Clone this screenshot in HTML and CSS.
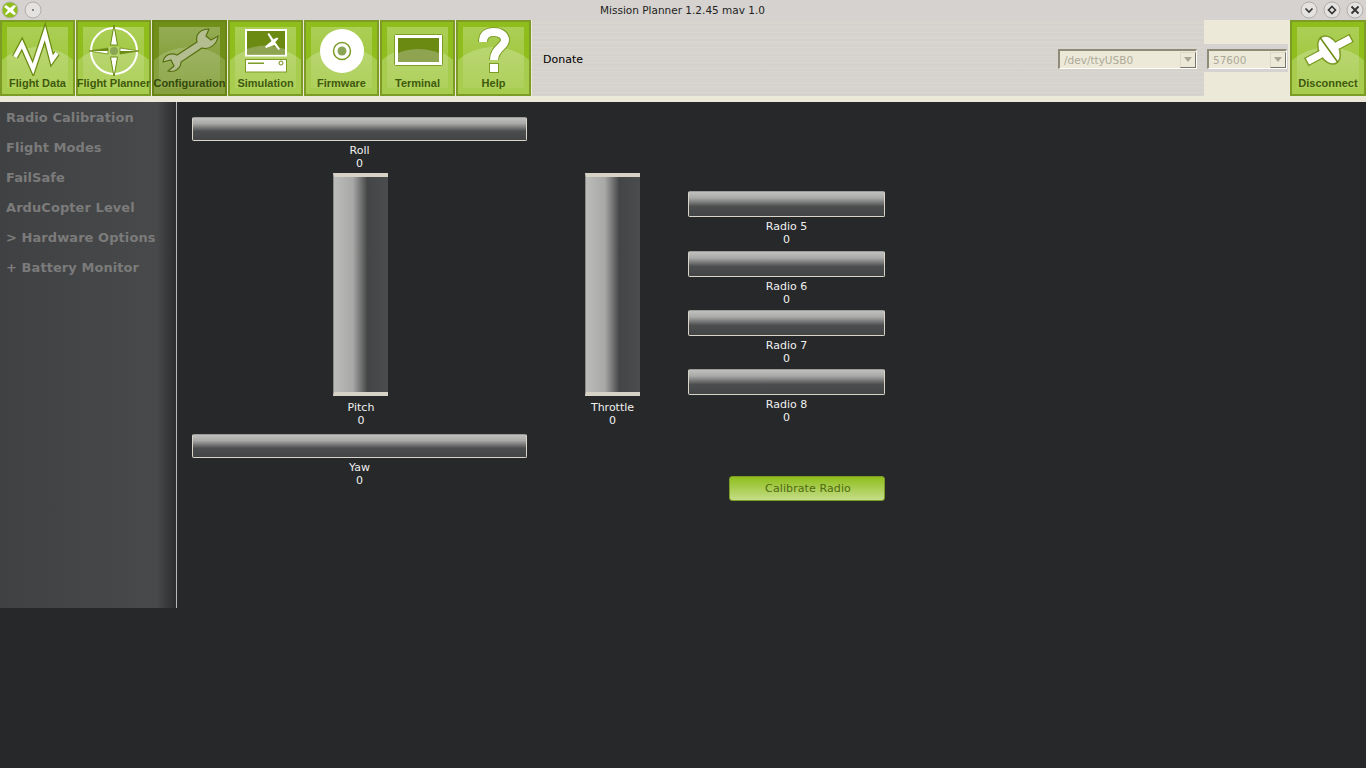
FILE: index.html
```html
<!DOCTYPE html>
<html lang="en">
<head>
    <meta charset="UTF-8">
    <title>Mission Planner 1.2.45 mav 1.0</title>
    <link rel="stylesheet" href="styles.css">
</head>
<body>
    <div class="titlebar">
        <div class="win-group">
            <svg class="win-btn" viewBox="0 0 18 18">
                <circle cx="9" cy="9" r="8" fill="#8fbe1c" stroke="#b5b5a8"/>
                <path d="M3 6 L5 4 L9 7 L13 4 L15 5 L12 9 L15 13 L13 14 L9 11 L5 14 L4 13 L7 9 Z" fill="#fff"/>
            </svg>
            <svg class="win-btn" viewBox="0 0 18 18">
                <circle cx="9" cy="9" r="8" fill="#e4e2e0" stroke="#b0adaa"/>
                <circle cx="9" cy="9" r="1" fill="#666"/>
            </svg>
        </div>
        <div class="win-title">Mission Planner 1.2.45 mav 1.0</div>
        <div class="win-group win-group-right">
            <svg class="win-btn" viewBox="0 0 18 18">
                <circle cx="9" cy="9" r="8" fill="#e4e2e0" stroke="#b0adaa"/>
                <path d="M5.5 7.5 L9 11 L12.5 7.5" fill="none" stroke="#333" stroke-width="1.6"/>
            </svg>
            <svg class="win-btn" viewBox="0 0 18 18">
                <circle cx="9" cy="9" r="8" fill="#e4e2e0" stroke="#b0adaa"/>
                <path d="M9 5.5 L12.5 9 L9 12.5 L5.5 9 Z" fill="none" stroke="#333" stroke-width="1.6"/>
            </svg>
            <svg class="win-btn" viewBox="0 0 18 18">
                <circle cx="9" cy="9" r="8" fill="#e4e2e0" stroke="#b0adaa"/>
                <path d="M5.5 5.5 L12.5 12.5 M12.5 5.5 L5.5 12.5" fill="none" stroke="#333" stroke-width="1.8"/>
            </svg>
        </div>
    </div>

    <div class="toolbar">
        <div class="tool-btns">
            <div class="tool-btn">
                <svg class="tool-icon" viewBox="2 22 71 54">
                    <path class="zig-out" d="M15 57 L22 44 L33 69 L45 33 L52 60 L57 53"/>
                    <path class="zig-in" d="M15 57 L22 44 L33 69 L45 33 L52 60 L57 53"/>
                </svg>
                <span>Flight Data</span>
            </div>
            <div class="tool-btn">
                <svg class="tool-icon" viewBox="2 22 71 54">
                    <circle cx="38" cy="51" r="23" fill="none" stroke="#fff" stroke-width="2"/>
                    <path d="M38 25 L41.500 45 L34.500 45 Z M38 77 L41.500 57 L34.500 57 Z" fill="#fff" stroke="#6b8a12"/>
                    <path d="M13 51 L32 48 L32 54 Z M63 51 L44 48 L44 54 Z" fill="#fff" stroke="#6b8a12" stroke-width="0.8"/>
                    <path d="M13 51 L32 48 L32 51 Z M63 51 L44 54 L44 51 Z" fill="#6b8a12"/>
                    <circle cx="38" cy="51" r="4" fill="#8aa654"/>
                </svg>
                <span>Flight Planner</span>
            </div>
            <div class="tool-btn tool-btn-active">
                <svg class="tool-icon" viewBox="2 22 71 54">
                    <path d="M57 29 C48 29 43 35 45 42 L25 55 C19 52 12 55 11 62 L19 60 L22 66 L16 71 C23 73 29 68 29 62 L50 48 C57 50 65 45 66 36 L59 40 L54 36 Z" fill="#b3bd90" stroke="#56700f" stroke-width="1.2"/>
                </svg>
                <span>Configuration</span>
            </div>
            <div class="tool-btn">
                <svg class="tool-icon" viewBox="2 22 71 54">
                    <rect x="18" y="30" width="40" height="25.500" fill="#6b8a12" stroke="#fff" stroke-width="2"/>
                    <path d="M19 49 Q38 42 57 49 L57 54.500 L19 54.500 Z" fill="#8ea450"/>
                    <path d="M39.500 34 L41 33 L52 49 L50.500 50 L46.500 45 L38 48 L37 46.500 L43.500 41 Z M44 40 L49 37.500 L50.500 38.500 L46.500 43 Z" fill="#fff"/>
                    <rect x="17.500" y="59.500" width="41" height="12.500" fill="#fff" stroke="#7d9c25"/>
                    <rect x="20" y="62.500" width="16" height="1.500" fill="#7d9c25"/>
                    <circle cx="53" cy="63" r="2" fill="#fff" stroke="#6b8a12"/>
                </svg>
                <span>Simulation</span>
            </div>
            <div class="tool-btn">
                <svg class="tool-icon" viewBox="2 22 71 54">
                    <circle cx="38" cy="51" r="22" fill="#fff"/>
                    <circle cx="38" cy="51" r="8.500" fill="none" stroke="#7d9c25" stroke-width="1.500"/>
                    <circle cx="38" cy="51" r="4.500" fill="#8aa654"/>
                </svg>
                <span>Firmware</span>
            </div>
            <div class="tool-btn">
                <svg class="tool-icon" viewBox="2 22 71 54">
                    <rect x="14.500" y="34.500" width="48" height="31" rx="1" fill="#fff" stroke="#7d9c25"/>
                    <rect x="18" y="38" width="41" height="24" fill="#6b8a12"/>
                    <path d="M18 53 Q38 45 59 53 L59 62 L18 62 Z" fill="#8ea450"/>
                </svg>
                <span>Terminal</span>
            </div>
            <div class="tool-btn">
                <svg class="tool-icon" viewBox="2 22 71 54">
                    <path class="hook-out" d="M27 42 C27 35 31 32 38 32 C45 32 49 36 49 40 C49 47 38 48 38 60"/>
                    <path class="hook-in" d="M27 42 C27 35 31 32 38 32 C45 32 49 36 49 40 C49 47 38 48 38 60"/>
                    <rect x="33.500" y="63.500" width="9" height="9" fill="#fff" stroke="#7d9c25"/>
                </svg>
                <span>Help</span>
            </div>
        </div>
        <div class="toolbar-wood">
            <a class="donate">Donate</a>
            <div class="combo combo-port">
                <span>/dev/ttyUSB0</span>
                <i class="combo-arrow"></i>
            </div>
        </div>
        <div class="toolbar-conn">
            <div class="baud-strip">
                <div class="combo combo-baud">
                    <span>57600</span>
                    <i class="combo-arrow"></i>
                </div>
            </div>
        </div>
        <div class="tool-btn tool-btn-conn">
            <svg class="tool-icon" viewBox="2 22 72 54">
                <g transform="rotate(-28 39 50)">
                    <g fill="#fff" stroke="#7d9c25" stroke-width="1.500">
                        <rect x="14" y="46" width="50" height="8"/>
                        <ellipse cx="39" cy="50" rx="10" ry="15"/>
                    </g>
                    <rect x="15" y="46.500" width="48" height="7" fill="#fff"/>
                    <path d="M37 35 L41 65" stroke="#6b8a12" stroke-width="1.500"/>
                </g>
            </svg>
            <span>Disconnect</span>
        </div>
    </div>
    <div class="strip"></div>

    <div class="main">
        <div class="sidebar">
            <div class="side-item">Radio Calibration</div>
            <div class="side-item">Flight Modes</div>
            <div class="side-item">FailSafe</div>
            <div class="side-item">ArduCopter Level</div>
            <div class="side-item">&gt; Hardware Options</div>
            <div class="side-item">+ Battery Monitor</div>
        </div>
        <div class="content">
            <div class="col-sticks">
                <div class="hbar"></div>
                <div class="bar-label">Roll<br>0</div>
                <div class="vbar vbar-pitch"></div>
                <div class="bar-label label-pitch label-shift">Pitch<br>0</div>
                <div class="hbar"></div>
                <div class="bar-label">Yaw<br>0</div>
            </div>
            <div class="col-throttle">
                <div class="vbar"></div>
                <div class="bar-label label-pitch">Throttle<br>0</div>
            </div>
            <div class="col-radios">
                <div class="radio-row">
                    <div class="hbar hbar-radio"></div>
                    <div class="bar-label">Radio 5<br>0</div>
                </div>
                <div class="radio-row">
                    <div class="hbar hbar-radio"></div>
                    <div class="bar-label">Radio 6<br>0</div>
                </div>
                <div class="radio-row">
                    <div class="hbar hbar-radio"></div>
                    <div class="bar-label">Radio 7<br>0</div>
                </div>
                <div class="radio-row">
                    <div class="hbar hbar-radio"></div>
                    <div class="bar-label">Radio 8<br>0</div>
                </div>
                <button class="calibrate">Calibrate Radio</button>
            </div>
        </div>
    </div>
</body>
</html>
```

FILE: styles.css
```css
* {
    box-sizing: border-box;
}

html, body {
    height: 100%;
}

body {
    margin: 0;
    background: #26282a;
    font-family: "DejaVu Sans", sans-serif;
    font-size: 11px;
    overflow: hidden;
}

/* window title bar */
.titlebar {
    height: 20px;
    background: #d6d2cf;
    display: flex;
    align-items: center;
    justify-content: space-between;
    padding: 0 2px 0 1px;
}

.win-title {
    color: #222;
    font-size: 10.5px;
}

.win-group {
    display: flex;
    gap: 5px;
    width: 110px;
}

.win-group-right {
    justify-content: flex-end;
}

.win-btn {
    width: 18px;
    height: 18px;
}

/* toolbar */
.toolbar {
    height: 76px;
    display: flex;
    background: #ece9d8;
}

.tool-btns {
    display: flex;
    gap: 1px;
}

.tool-btn {
    width: 75px;
    height: 76px;
    border: 2px solid #7d9c25;
    position: relative;
    display: flex;
    flex-direction: column;
    align-items: center;
    background:
        radial-gradient(ellipse 52px 47px at 50% 100%, rgba(255,255,255,0.22) 99%, transparent 100%),
        linear-gradient(#8fbe1c, #8fbe1c);
    color: #3f5a0c;
    font-family: "Liberation Sans", sans-serif;
    font-weight: bold;
    font-size: 11px;
    white-space: nowrap;
}

.tool-btn::before {
    content: "";
    position: absolute;
    left: 5px;
    right: 5px;
    top: 5px;
    bottom: 6px;
    background: linear-gradient(rgba(255,255,255,0.26), rgba(255,255,255,0.08));
}

.tool-btn-active {
    border-color: #688516;
    background:
        radial-gradient(ellipse 52px 47px at 50% 100%, rgba(255,255,255,0.16) 99%, transparent 100%),
        linear-gradient(#6f8f18, #6f8f18);
    color: #33480a;
}

.tool-btn-conn {
    width: 76px;
}

.tool-icon {
    width: 71px;
    height: 54px;
    position: relative;
    flex: none;
}

.tool-btn-conn .tool-icon {
    width: 72px;
}

.tool-btn span {
    position: relative;
    line-height: 14px;
}

.zig-out, .zig-in, .hook-out, .hook-in {
    fill: none;
    stroke-linejoin: miter;
    stroke-miterlimit: 10;
}

.zig-out {
    stroke: #6b8a12;
    stroke-width: 6.5;
}

.zig-in {
    stroke: #fff;
    stroke-width: 4;
}

.hook-out {
    stroke: #7d9c25;
    stroke-width: 10;
}

.hook-in {
    stroke: #fff;
    stroke-width: 8;
}

.toolbar-wood {
    flex: 1;
    display: flex;
    align-items: center;
    margin-left: 1px;
    padding: 0 7px 0 11px;
    background:
        repeating-linear-gradient(0deg, rgba(255,255,255,0.05) 0 1px, transparent 1px 3px),
        repeating-linear-gradient(0deg, rgba(0,0,0,0.012) 0 2px, transparent 2px 5px),
        #d7d3cd;
}

.donate {
    color: #000;
    font-size: 11px;
    margin-top: 3px;
}

.combo {
    height: 20px;
    background: #ece9d8;
    border-style: solid;
    border-width: 2px 1px 1px 2px;
    border-color: #8e8c78 #fff #fff #8e8c78;
    display: flex;
    align-items: center;
    justify-content: space-between;
    color: #aca998;
    font-size: 10.5px;
    padding-left: 4px;
}

.combo-port {
    width: 139px;
    margin-left: auto;
    margin-top: 2px;
}

.combo-baud {
    width: 80px;
    margin-top: 2px;
}

.combo-arrow {
    width: 16px;
    height: 16px;
    background: #ece9d8;
    border: 1px solid;
    border-color: #dcd9c8 #77756a #77756a #dcd9c8;
    display: flex;
    align-items: center;
    justify-content: center;
}

.combo-arrow::after {
    content: "";
    border-left: 4px solid transparent;
    border-right: 4px solid transparent;
    border-top: 5px solid #a8a698;
}

.toolbar-conn {
    width: 86px;
    display: flex;
    align-items: center;
}

.baud-strip {
    width: 84px;
    height: 28px;
    background: #d6d2cf;
    padding-left: 3px;
    display: flex;
    align-items: center;
}

.strip {
    height: 6px;
    background: #ece9d8;
}

/* main panel */
.main {
    height: 506px;
    display: flex;
}

.sidebar {
    width: 177px;
    padding-top: 1px;
    border-right: 1px solid #b8b8b8;
    background: linear-gradient(to right, #404143, #48494a 89%, #2c2d2f 100%);
}

.side-item {
    height: 30px;
    line-height: 30px;
    padding-left: 6px;
    color: #7b7b7b;
    font-weight: bold;
    font-size: 13px;
    letter-spacing: 0.07px;
    white-space: nowrap;
}

.content {
    flex: 1;
    display: flex;
    padding: 15px 0 0 15px;
    align-items: flex-start;
}

.col-sticks {
    width: 335px;
    display: flex;
    flex-direction: column;
    align-items: center;
}

.col-throttle {
    width: 55px;
    margin-left: 58px;
    margin-top: 56px;
    display: flex;
    flex-direction: column;
    align-items: center;
}

.col-radios {
    width: 197px;
    margin-left: 48px;
    margin-top: 74px;
    display: flex;
    flex-direction: column;
}

.radio-row {
    margin-bottom: 1px;
}

.radio-row:first-child {
    margin-bottom: 2px;
}

.hbar {
    width: 100%;
    height: 24px;
    border: 1px solid #d8d4c8;
    border-top-color: #9c9c9a;
    border-radius: 2px;
    background: linear-gradient(#c0c0be, #a9a9a8 25%, #4c4d4e 60%, #434446);
}

.hbar-radio {
    height: 26px;
}

.vbar {
    width: 55px;
    height: 223px;
    flex: none;
    border-top: 4px solid #d6d2c6;
    border-bottom: 4px solid #d6d2c6;
    border-left: 1px solid #8a8a88;
    background: linear-gradient(to right, #bcbcbb, #a8a8a7 35%, #444546 62%, #4b4c4e);
}

.vbar-pitch {
    margin-left: 2px;
}

.bar-label {
    color: #f0f0f0;
    font-size: 11px;
    line-height: 13px;
    text-align: center;
    margin-top: 3px;
    margin-bottom: 3px;
}

.label-pitch {
    margin-top: 5px;
    margin-bottom: 7px;
}

.label-shift {
    padding-left: 3px;
}

.calibrate {
    align-self: flex-end;
    width: 156px;
    height: 25px;
    margin-top: 48px;
    border: 1px solid #7d9c25;
    border-radius: 3px;
    background: linear-gradient(#8fbe1c, #c4dd88);
    color: #4f6a10;
    font-family: "DejaVu Sans", sans-serif;
    font-size: 11px;
    letter-spacing: 0.1px;
    padding: 0 0 0 2px;
}
```
